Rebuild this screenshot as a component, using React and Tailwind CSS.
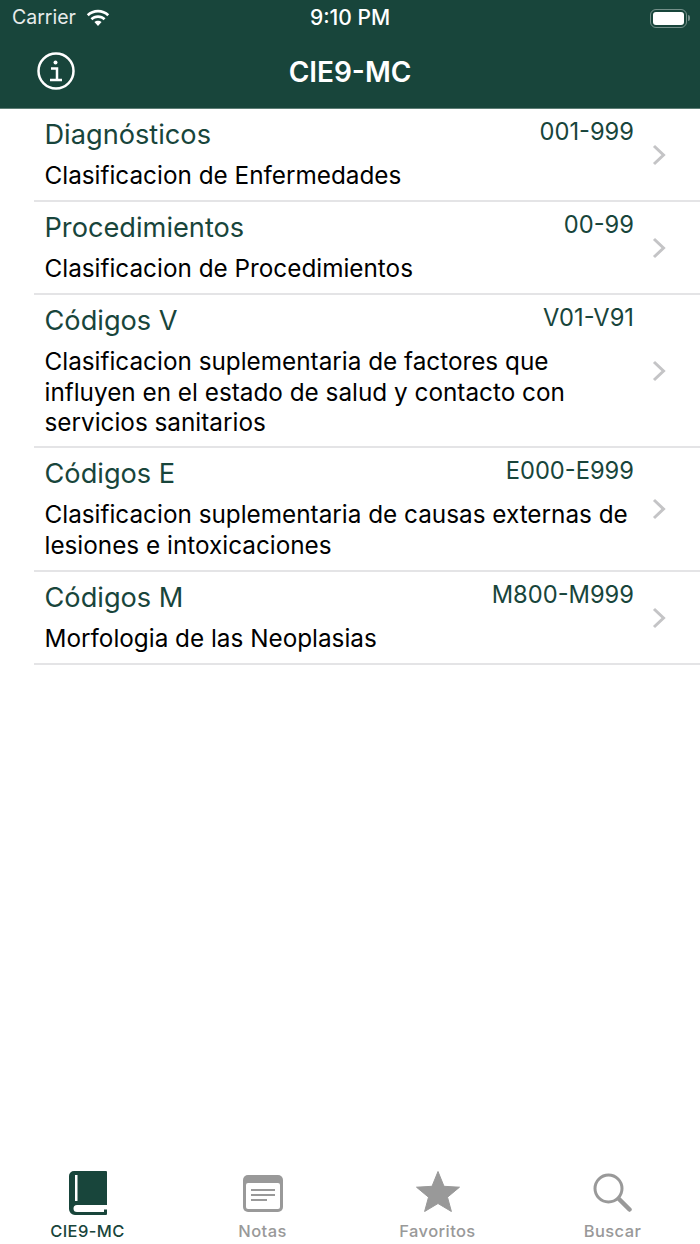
import React from "react";

const rows = [
  { title: "Diagnósticos", range: "001-999", text: "Clasificacion de Enfermedades", h: "h-[93px]" },
  { title: "Procedimientos", range: "00-99", text: "Clasificacion de Procedimientos", h: "h-[93px]" },
  {
    title: "Códigos V",
    range: "V01-V91",
    text: "Clasificacion suplementaria de factores que influyen en el estado de salud y contacto con servicios sanitarios",
    h: "h-[153px]",
  },
  {
    title: "Códigos E",
    range: "E000-E999",
    text: "Clasificacion suplementaria de causas externas de lesiones e intoxicaciones",
    h: "h-[124px]",
  },
  { title: "Códigos M", range: "M800-M999", text: "Morfologia de las Neoplasias", h: "h-[93px]" },
];

const Wifi = () => (
  <svg width="26" height="19" viewBox="0 0 26 19" fill="#fff">
    <path d="M13 3.6c3.5 0 6.8 1.3 9.3 3.7l1.9-2C21.200 2.400 17.200.8 13 .8S4.800 2.400 1.800 5.300l1.900 2C6.200 4.900 9.500 3.600 13 3.600z" />
    <path d="M13 9c2.100 0 4.100.8 5.600 2.200l1.900-2C18.500 7.300 15.800 6.200 13 6.200s-5.500 1.100-7.500 3l1.900 2C8.900 9.800 10.900 9 13 9z" />
    <path d="M13 11.700c-1.300 0-2.600.5-3.600 1.400L13 17l3.600-3.900c-1-.9-2.300-1.400-3.600-1.400z" />
  </svg>
);

const Battery = () => (
  <div className="flex items-center">
    <div className="w-[37px] h-[19px] rounded-[6px] border-[1.5px] border-white/40 p-[2px]">
      <div className="w-full h-full rounded-[3px] bg-white" />
    </div>
    <div className="w-[2px] h-[6px] ml-[1px] rounded-r-sm bg-white/40" />
  </div>
);

const Chevron = () => (
  <svg width="14" height="22" viewBox="0 0 14 22" fill="none" stroke="#c4c4c6" strokeWidth="3">
    <path d="M2 2l9.500 9L2 20" />
  </svg>
);

const InfoIcon = () => (
  <svg width="38" height="38" viewBox="0 0 38 38" fill="none" stroke="#fff">
    <circle cx="19" cy="19" r="17.500" strokeWidth="2.500" />
    <circle cx="18.500" cy="10.500" r="2" fill="#fff" stroke="none" />
    <path d="M14 16.500h6v11M13 28h12" strokeWidth="2.500" />
  </svg>
);

const TabBook = () => (
  <svg width="38" height="44" viewBox="0 0 38 44">
    <path
      d="M5 0h32a1 1 0 0 1 1 1v33H8a3.500 3.500 0 0 0 0 7h27v-2.500h3V43a1 1 0 0 1-1 1H6a6 6 0 0 1-6-6V5a5 5 0 0 1 5-5z"
      fill="#18453b"
    />
    <rect x="6" y="4" width="2.500" height="26" fill="#fff" />
  </svg>
);

const TabNotes = () => (
  <svg className="mb-[3px]" width="40" height="37" viewBox="0 0 40 37">
    <rect x="0" y="0" width="40" height="37" rx="5" fill="#999" />
    <rect x="3" y="8" width="34" height="26" rx="2" fill="#fff" />
    <rect x="8" y="14" width="24" height="2" fill="#999" />
    <rect x="8" y="19" width="24" height="2" fill="#999" />
    <rect x="8" y="24" width="16" height="2" fill="#999" />
  </svg>
);

const TabStar = () => (
  <svg className="mb-[3px]" width="44" height="42" viewBox="0 0 44 42">
    <path
      d="M22 1.500l6 14.800 15.500.9-12 10 3.900 14.300L22 33.500 8.600 41.500l3.900-14.300-12-10 15.500-.9z"
      fill="#999"
      stroke="#999"
      strokeWidth="1"
      strokeLinejoin="round"
    />
  </svg>
);

const TabSearch = () => (
  <svg className="mb-[3px]" width="40" height="39" viewBox="0 0 40 39" fill="none" stroke="#999">
    <circle cx="15.500" cy="15.500" r="13.500" strokeWidth="3" />
    <path d="M26 26l10.500 10.500" strokeWidth="4.500" strokeLinecap="round" />
  </svg>
);

const tabs = [
  { label: "CIE9-MC", icon: <TabBook />, active: true },
  { label: "Notas", icon: <TabNotes /> },
  { label: "Favoritos", icon: <TabStar /> },
  { label: "Buscar", icon: <TabSearch /> },
];

export default function App() {
  return (
    <div className="w-[700px] h-[1244px] flex flex-col bg-white font-['Inter',sans-serif]">
      <header className="h-[109px] shrink-0 bg-[#18453b] text-white border-b border-[#5d7d75]">
        <div className="h-[36px] px-3 grid grid-cols-3 items-center">
          <div className="flex items-center gap-[9px] text-[19.500px] text-white/90">
            Carrier
            <Wifi />
          </div>
          <div className="text-center text-[21px] font-medium">9:10 PM</div>
          <div className="flex justify-end mr-[-2px]">
            <Battery />
          </div>
        </div>
        <div className="h-[72px] relative flex items-center justify-center">
          <div className="absolute left-[37px] top-[16px]">
            <InfoIcon />
          </div>
          <h1 className="text-[28px] font-semibold">CIE9-MC</h1>
        </div>
      </header>

      <main className="flex-1">
        {rows.map((row) => (
          <div key={row.title} className={`${row.h} relative pl-[44.500px] flex flex-col`}>
            <div className="flex justify-between items-start pr-[66px] pt-[7px]">
              <span className="text-[27.200px] leading-[38px] text-[#18453b]">{row.title}</span>
              <span className="text-[23.700px] leading-[32px] text-[#18453b]">{row.range}</span>
            </div>
            <p className="mt-[6px] pr-[66px] text-[24.300px] leading-[30.500px] text-black">{row.text}</p>
            <div className="absolute right-[34px] top-0 bottom-[2px] flex items-center">
              <Chevron />
            </div>
            <div className="absolute left-[34px] right-0 bottom-0 h-[2px] bg-[#e4e4e6]" />
          </div>
        ))}
      </main>

      <nav className="h-[94px] shrink-0 grid grid-cols-4">
        {tabs.map((tab) => (
          <div key={tab.label} className="flex flex-col items-center">
            <div className="h-[66px] flex items-end pb-[1px]">{tab.icon}</div>
            <span
              className={`mt-[4px] text-[16.500px] leading-[22px] font-medium tracking-wide ${
                tab.active ? "text-[#18453b]" : "text-[#999]"
              }`}
            >
              {tab.label}
            </span>
          </div>
        ))}
      </nav>
    </div>
  );
}
